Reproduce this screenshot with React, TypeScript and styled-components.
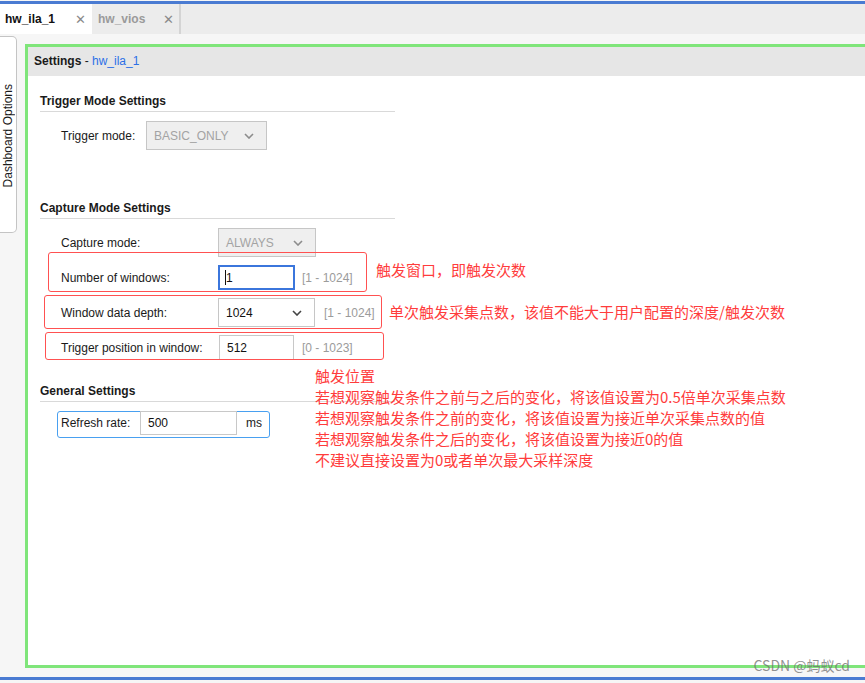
import React, { FC } from "react";
import styled, { createGlobalStyle } from "styled-components";

const UI_FONT = `"Liberation Sans", Arial, sans-serif`;
const NOTE_FONT = `"Noto Sans CJK SC", "Liberation Sans", sans-serif`;
const NOTE_RED = "#ff3c3c";

const GlobalStyle = createGlobalStyle`
  html, body {
    margin: 0;
    padding: 0;
    background: #f6f6f6;
  }
  body {
    font-family: ${UI_FONT};
    font-size: 12px;
    color: #1a1a1a;
  }
`;

const Page = styled.div`
  position: relative;
  width: 865px;
  height: 683px;
  display: flex;
  flex-direction: column;
  overflow: hidden;
  background: #f6f6f6;
`;

const Accent = styled.div<{ $top?: boolean }>`
  height: 3px;
  flex: none;
  background: #4a7bd2;
  margin-top: ${(p) => (p.$top ? 1 : 0)}px;
  margin-bottom: ${(p) => (p.$top ? 0 : 3)}px;
`;

const TabBar = styled.div`
  height: 30px;
  flex: none;
  display: flex;
  background: #ececec;
`;

const Tab = styled.div<{ $active?: boolean }>`
  width: ${(p) => (p.$active ? 92 : 89)}px;
  display: flex;
  align-items: center;
  justify-content: space-between;
  padding: 0 ${(p) => (p.$active ? 6 : 5)}px 0 ${(p) => (p.$active ? 5 : 6)}px;
  box-sizing: border-box;
  background: ${(p) => (p.$active ? "#ffffff" : "#ececec")};
  border-right: ${(p) => (p.$active ? "none" : "2px solid #d4d4d4")};
  font-weight: bold;
  font-size: 12px;
  color: ${(p) => (p.$active ? "#111" : "#9a9a9a")};
`;

const TabClose = styled.span`
  font-weight: normal;
  font-size: 13px;
  color: #8a8a8a;
`;

const Workspace = styled.div`
  flex: 1;
  display: flex;
  min-height: 0;
`;

const SideTab = styled.div`
  width: 17px;
  height: 197px;
  margin-top: 2px;
  flex: none;
  box-sizing: border-box;
  background: #ffffff;
  border: 1px solid #c4c4c4;
  border-left: none;
  border-radius: 0 5px 5px 0;
  display: flex;
  align-items: center;
  justify-content: center;
`;

const SideLabel = styled.span`
  writing-mode: vertical-rl;
  transform: rotate(180deg);
  white-space: nowrap;
  font-size: 12px;
  color: #1a1a1a;
  margin-top: 2px;
`;

const Frame = styled.div`
  flex: 1;
  margin: 10px 0 9px 8px;
  border: 3px solid #7fe57a;
  border-right: none;
  display: flex;
  flex-direction: column;
  min-width: 0;
`;

const PanelHeader = styled.div`
  height: 29px;
  flex: none;
  display: flex;
  align-items: center;
  padding: 0 0 2px 6px;
  box-sizing: border-box;
  background: #e6e6e6;
  font-size: 12px;
`;

const HeaderTitle = styled.span`
  font-weight: bold;
`;

const HeaderLink = styled.span`
  color: #2c6fe6;
`;

const Content = styled.div`
  position: relative;
  flex: 1;
  background: #ffffff;
  padding-left: 12px;
`;

const Section = styled.div<{ $gap: number }>`
  margin-top: ${(p) => p.$gap}px;
  width: 355px;
`;

const SectionTitle = styled.div`
  font-weight: bold;
  font-size: 12px;
  line-height: 14px;
  padding-bottom: 3px;
  border-bottom: 1px solid #d9d9d9;
  margin-bottom: 9px;
`;

const Rows = styled.div`
  display: flex;
  flex-direction: column;
  gap: 6px;
  padding-left: 21px;
`;

const Row = styled.div`
  height: 29px;
  display: flex;
  align-items: center;
`;

const Label = styled.span<{ $width: number }>`
  width: ${(p) => p.$width}px;
  flex: none;
  white-space: nowrap;
`;

const Select = styled.div<{ $width: number; $disabled?: boolean }>`
  width: ${(p) => p.$width}px;
  height: 29px;
  flex: none;
  box-sizing: border-box;
  display: flex;
  align-items: center;
  justify-content: space-between;
  padding: 0 12px 0 7px;
  border: 1px solid #c6c6c6;
  background: ${(p) => (p.$disabled ? "#efefef" : "#ffffff")};
  color: ${(p) => (p.$disabled ? "#a3a3a3" : "#111")};
`;

const ChevronSvg = styled.svg<{ $muted?: boolean }>`
  width: 10px;
  height: 6px;
  stroke: ${(p) => (p.$muted ? "#8c8c8c" : "#444")};
`;

const Chevron: FC<{ muted?: boolean }> = ({ muted }) => (
  <ChevronSvg $muted={muted} viewBox="0 0 10 6" fill="none">
    <polyline points="1,1 5,5 9,1" strokeWidth="1.6" />
  </ChevronSvg>
);

const TextInput = styled.div<{ $width: number; $focused?: boolean }>`
  width: ${(p) => p.$width}px;
  height: 25px;
  flex: none;
  box-sizing: border-box;
  display: flex;
  align-items: center;
  padding-left: ${(p) => (p.$focused ? 5 : 7)}px;
  border: ${(p) => (p.$focused ? "2px solid #3b76dc" : "1px solid #c8c8c8")};
  background: #ffffff;
  color: #111;
`;

const Caret = styled.span`
  width: 1px;
  height: 15px;
  background: #111;
`;

const Range = styled.span<{ $gap: number }>`
  margin-left: ${(p) => p.$gap}px;
  color: #9b9b9b;
  white-space: nowrap;
`;

const GroupBox = styled.div`
  margin-left: 17px;
  width: 213px;
  height: 27px;
  box-sizing: border-box;
  display: flex;
  align-items: flex-start;
  padding: 0 0 0 3px;
  border: 1.5px solid #49a0f0;
  border-radius: 3px;
`;

const GroupLabel = styled.span`
  width: 79px;
  line-height: 23px;
  flex: none;
`;

const GroupInput = styled(TextInput)`
  height: 24px;
  margin-top: -1px;
`;

const Unit = styled.span`
  margin-left: 9px;
  line-height: 23px;
`;

const NoteBox = styled.div`
  position: absolute;
  box-sizing: border-box;
  border: 1.5px solid #ff5151;
  border-radius: 3px;
  pointer-events: none;
`;

const NoteText = styled.div`
  position: absolute;
  font-family: ${NOTE_FONT};
  font-size: 15px;
  line-height: 21px;
  color: ${NOTE_RED};
  white-space: nowrap;
`;

const Watermark = styled.div`
  position: absolute;
  right: 15px;
  bottom: 8px;
  font-family: ${NOTE_FONT};
  font-size: 14px;
  color: rgba(110, 110, 110, 0.75);
`;

const notes = [
  { left: 20, top: 176, w: 319, h: 40 },
  { left: 16, top: 219, w: 338, h: 34 },
  { left: 17, top: 256, w: 339, h: 28 },
];

const positionNotes = [
  "触发位置",
  "若想观察触发条件之前与之后的变化，将该值设置为0.5倍单次采集点数",
  "若想观察触发条件之前的变化，将该值设置为接近单次采集点数的值",
  "若想观察触发条件之后的变化，将该值设置为接近0的值",
  "不建议直接设置为0或者单次最大采样深度",
];

const App: FC = () => (
  <>
    <GlobalStyle />
    <Page>
      <Accent $top />
      <TabBar>
        <Tab $active>
          hw_ila_1 <TabClose>✕</TabClose>
        </Tab>
        <Tab>
          hw_vios <TabClose>✕</TabClose>
        </Tab>
      </TabBar>

      <Workspace>
        <SideTab>
          <SideLabel>Dashboard Options</SideLabel>
        </SideTab>

        <Frame>
          <PanelHeader>
            <HeaderTitle>Settings</HeaderTitle>
            &nbsp;-&nbsp;<HeaderLink>hw_ila_1</HeaderLink>
          </PanelHeader>

          <Content>
            <Section $gap={18}>
              <SectionTitle>Trigger Mode Settings</SectionTitle>
              <Rows>
                <Row>
                  <Label $width={85}>Trigger mode:</Label>
                  <Select $width={121} $disabled>
                    BASIC_ONLY <Chevron muted />
                  </Select>
                </Row>
              </Rows>
            </Section>

            <Section $gap={51}>
              <SectionTitle>Capture Mode Settings</SectionTitle>
              <Rows>
                <Row>
                  <Label $width={157}>Capture mode:</Label>
                  <Select $width={98} $disabled>
                    ALWAYS <Chevron muted />
                  </Select>
                </Row>
                <Row>
                  <Label $width={157}>Number of windows:</Label>
                  <TextInput $width={77} $focused>
                    <Caret />1
                  </TextInput>
                  <Range $gap={7}>[1 - 1024]</Range>
                </Row>
                <Row>
                  <Label $width={157}>Window data depth:</Label>
                  <Select $width={97}>
                    1024 <Chevron />
                  </Select>
                  <Range $gap={9}>[1 - 1024]</Range>
                </Row>
                <Row>
                  <Label $width={158}>Trigger position in window:</Label>
                  <TextInput $width={75}>512</TextInput>
                  <Range $gap={8}>[0 - 1023]</Range>
                </Row>
              </Rows>
            </Section>

            <Section $gap={22}>
              <SectionTitle>General Settings</SectionTitle>
              <GroupBox>
                <GroupLabel>Refresh rate:</GroupLabel>
                <GroupInput $width={97}>500</GroupInput>
                <Unit>ms</Unit>
              </GroupBox>
            </Section>

            {notes.map((n, i) => (
              <NoteBox
                key={i}
                style={{ left: n.left, top: n.top, width: n.w, height: n.h }}
              />
            ))}
            <NoteText style={{ left: 348, top: 183 }}>
              触发窗口，即触发次数
            </NoteText>
            <NoteText style={{ left: 361, top: 225 }}>
              单次触发采集点数，该值不能大于用户配置的深度/触发次数
            </NoteText>
            <NoteText style={{ left: 287, top: 289 }}>
              {positionNotes.map((line) => (
                <div key={line}>{line}</div>
              ))}
            </NoteText>
          </Content>
        </Frame>
      </Workspace>

      <Accent />
      <Watermark>CSDN @蚂蚁cd</Watermark>
    </Page>
  </>
);

export default App;
